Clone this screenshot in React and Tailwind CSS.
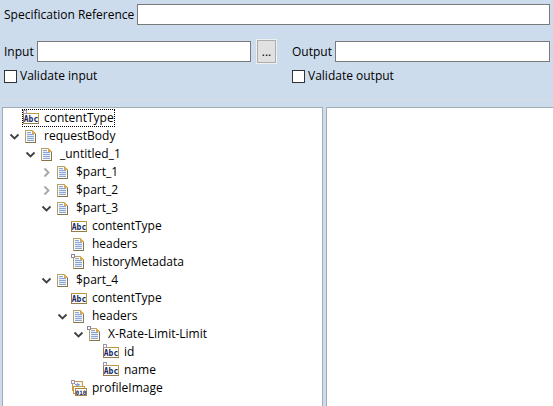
import React from 'react';

function PageShape({ marked }) {
  return (
    <g shapeRendering="crispEdges">
      <path d="M2.5 2.5H9.5L12.5 5.5V14.5H2.5Z" fill="#fdfbf2" stroke="#b3a06d" />
      <path d="M12.5 6V14.5H2.5" fill="none" stroke="#85744a" />
      <path d="M9 2H10V3H11V4H12V5H13V6H9Z" fill="#d6a954" />
      <path d="M4 4H8V5H4ZM4 6H11V7H4ZM4 8H11V9H4ZM4 10H11V11H4ZM4 12H11V13H4Z" fill="#8ba6d6" />
      <path d="M4 5H8V6H4ZM4 7H11V8H4ZM4 9H11V10H4ZM4 11H11V12H4Z" fill="#e3ebf8" />
      {marked && <rect x="0.5" y="0.5" width="3" height="3" fill="#fff" stroke="#8d819f" />}
    </g>
  );
}

function AbcShape({ marked }) {
  return (
    <g>
      <g shapeRendering="crispEdges">
        <rect x="0.5" y="3.5" width="15" height="10" fill="#fff" stroke="#c0983f" />
        <path d="M0.5 3.5V13.5H15.5" fill="none" stroke="#947b49" />
        {marked && <rect x="0.5" y="0.5" width="3" height="3" fill="#fff" stroke="#a394ae" />}
      </g>
      <text x="8" y="12" textAnchor="middle" fontFamily="DejaVu Sans Mono, monospace" fontSize="8" fontWeight="700" fill="#17295f">Abc</text>
    </g>
  );
}

function BinaryShape() {
  return (
    <g>
      <g shapeRendering="crispEdges">
        <rect x="1.5" y="1.5" width="10" height="9" fill="#f1f4fb" stroke="#c99c48" />
        <path d="M6 3H7V4H9V5H8V6H9V7H7V8H6V7H4V6H5V5H4V4H6Z" fill="#8da5d0" />
        <path d="M2.5 6.5H13.5V13.5H2.5Z" fill="#fff" stroke="#c99c48" />
        <rect x="4.5" y="8.5" width="11" height="7" fill="#fff" stroke="#a9873f" />
        <rect x="0.5" y="0.5" width="3" height="3" fill="#fff" stroke="#a394ae" />
      </g>
      <text x="10" y="14.5" textAnchor="middle" fontFamily="DejaVu Sans Mono, monospace" fontSize="6" fontWeight="700" fill="#17295f">010</text>
    </g>
  );
}

function NodeIcon({ kind, marked }) {
  return (
    <svg className="size-4 shrink-0" viewBox="0 0 16 16" aria-hidden="true">
      {kind === 'page' && <PageShape marked={marked} />}
      {kind === 'abc' && <AbcShape marked={marked} />}
      {kind === 'binary' && <BinaryShape />}
    </svg>
  );
}

function Chevron({ open }) {
  return (
    <svg className="h-4 w-3" viewBox="0 0 12 16" fill="none" aria-hidden="true">
      {open ? (
        <path d="M2.5 6.5L6.5 10.5L10.5 6.5" stroke="#404040" strokeWidth="1.8" />
      ) : (
        <path d="M4.5 4.5L8.5 8.5L4.5 12.5" stroke="#a6a6a6" strokeWidth="1.8" />
      )}
    </svg>
  );
}

const tree = [
  { name: 'contentType', kind: 'abc', marked: true, selected: true },
  {
    name: 'requestBody', kind: 'page', open: true, children: [
      {
        name: '_untitled_1', kind: 'page', open: true, children: [
          { name: '$part_1', kind: 'page', open: false },
          { name: '$part_2', kind: 'page', open: false },
          {
            name: '$part_3', kind: 'page', open: true, children: [
              { name: 'contentType', kind: 'abc' },
              { name: 'headers', kind: 'page' },
              { name: 'historyMetadata', kind: 'page', marked: true },
            ],
          },
          {
            name: '$part_4', kind: 'page', open: true, children: [
              { name: 'contentType', kind: 'abc' },
              {
                name: 'headers', kind: 'page', open: true, children: [
                  {
                    name: 'X-Rate-Limit-Limit', kind: 'page', marked: true, open: true, children: [
                      { name: 'id', kind: 'abc', marked: true },
                      { name: 'name', kind: 'abc', marked: true },
                    ],
                  },
                ],
              },
              { name: 'profileImage', kind: 'binary' },
            ],
          },
        ],
      },
    ],
  },
];

function TreeNode({ node }) {
  const expandable = node.open !== undefined;
  return (
    <li role="treeitem" aria-expanded={node.open} aria-selected={!!node.selected}>
      <div className="flex h-[18px] items-center">
        <span className="flex w-[18px] shrink-0 pl-1">
          {expandable && (
            <button type="button" aria-label={`Toggle ${node.name}`}>
              <Chevron open={node.open} />
            </button>
          )}
        </span>
        <span
          className={
            node.selected
              ? 'flex h-[18px] items-center gap-1 pr-px pl-px outline-1 -outline-offset-1 outline-dotted outline-black'
              : 'flex h-[18px] items-center gap-1 pl-px'
          }
        >
          <NodeIcon kind={node.kind} marked={node.marked} />
          <span className="whitespace-nowrap pl-px">{node.name}</span>
        </span>
      </div>
      {node.children && (
        <ul role="group" className="pl-4">
          {node.children.map((child) => (
            <TreeNode key={child.name} node={child} />
          ))}
        </ul>
      )}
    </li>
  );
}

function Field({ id, label }) {
  return (
    <div className="flex min-w-0 flex-1 items-center gap-[3px]">
      <label htmlFor={id} className="whitespace-nowrap">{label}</label>
      <input id={id} type="text" className="h-[21px] min-w-0 flex-1 border border-[#7a7a7a] bg-white px-1 outline-none" />
    </div>
  );
}

function Check({ label }) {
  return (
    <label className="flex items-center gap-[3px]">
      <input type="checkbox" className="size-[13px] appearance-none border border-[#333] bg-white checked:bg-[#333]" />
      {label}
    </label>
  );
}

export default function App() {
  return (
    <div className="flex min-h-screen flex-col bg-[#cddcec] font-['Open_Sans','Noto_Sans',sans-serif] text-[12px] leading-4 text-black">
      <form className="border-b border-[#d9dde3] pt-1 pr-[3px] pb-[15px] pl-1">
        <Field id="reference" label="Specification Reference" />
        <div className="mt-3.5 grid grid-cols-[273fr_258fr] gap-x-[15px] gap-y-1">
          <div className="flex h-[25px] items-center gap-[5px]">
            <Field id="input" label="Input" />
            <button
              type="button"
              aria-label="Browse"
              className="flex h-[25px] w-[21px] items-center justify-center border border-[#f0f0f0] bg-[#f0f0f0]"
            >
              <span className="flex h-[23px] w-[19px] items-center justify-center border border-[#adadad] bg-[#e1e1e1]">...</span>
            </button>
          </div>
          <Field id="output" label="Output" />
          <Check label="Validate input" />
          <Check label="Validate output" />
        </div>
      </form>
      <main className="mt-[7px] grid flex-1 grid-cols-[321fr_227fr] gap-[3px] pl-0.5">
        <section className="border border-b-0 border-[#a3abb5] bg-white pt-px pl-px">
          <ul role="tree" aria-label="Input structure">
            {tree.map((node) => (
              <TreeNode key={node.name} node={node} />
            ))}
          </ul>
        </section>
        <section aria-label="Output structure" className="border border-r-0 border-b-0 border-[#a3abb5] bg-white" />
      </main>
    </div>
  );
}
